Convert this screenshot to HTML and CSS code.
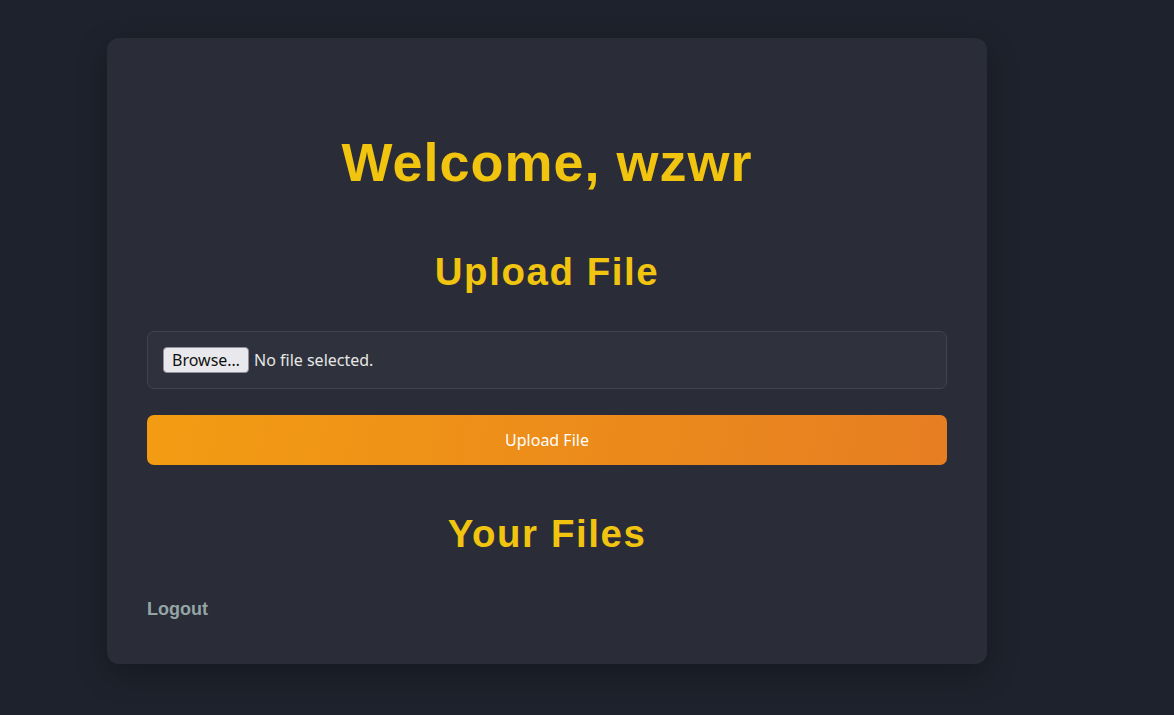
FILE: index.html
```html
<!DOCTYPE html>
<html lang="en">
<head>
<meta charset="utf-8">
<title>Dashboard</title>
<link rel="stylesheet" href="styles.css">
</head>
<body>
  <main class="card">
    <h1 class="title">Welcome, wzwr</h1>
    <h2 class="section-title upload-title">Upload File</h2>
    <form class="upload-form">
      <label class="file-box">
        <input type="file" class="file-input">
        <span class="browse-btn">Browse…</span>
        <span class="file-status">No file selected.</span>
      </label>
      <button type="button" class="upload-btn">Upload File</button>
    </form>
    <h2 class="section-title files-title">Your Files</h2>
    <a class="logout" href="#">Logout</a>
  </main>
</body>
</html>
```

FILE: styles.css
```css
html, body {
  margin: 0;
  padding: 0;
}

body {
  background: #1e222c;
  font-family: "Liberation Sans", Arial, sans-serif;
  min-height: 715px;
  padding: 38px 0 0 107px;
  box-sizing: border-box;
}

.card {
  width: 880px;
  box-sizing: border-box;
  padding: 40px 40px 44px;
  background: #2a2d38;
  border-radius: 12px;
  box-shadow: 0 10px 30px rgba(0, 0, 0, 0.25);
  display: flex;
  flex-direction: column;
}

.title {
  margin: 54px 0 0;
  font-size: 54px;
  line-height: 60px;
  font-weight: 700;
  letter-spacing: 1px;
  color: #f1c40f;
  text-align: center;
}

.section-title {
  margin: 0;
  font-size: 38.4px;
  line-height: 44px;
  font-weight: 700;
  letter-spacing: 1.6px;
  color: #f1c40f;
  text-align: center;
}

.upload-title {
  margin-top: 58px;
}

.files-title {
  margin-top: 47px;
}

.upload-form {
  margin-top: 37px;
  display: flex;
  flex-direction: column;
  gap: 26px;
}

.file-box {
  height: 58px;
  box-sizing: border-box;
  border: 1px solid #41444e;
  border-radius: 7px;
  background: #2f323d;
  padding: 0 15px;
  display: flex;
  align-items: center;
  gap: 5px;
  font-family: "Noto Sans", sans-serif;
  font-size: 16px;
  color: #e6e6e6;
}

.file-input {
  display: none;
}

.browse-btn {
  height: 26px;
  width: 86px;
  box-sizing: border-box;
  background: #e9e9ed;
  border: 1px solid #8f8f9d;
  border-radius: 4px;
  color: #111;
  font-size: 16px;
  display: flex;
  align-items: center;
  justify-content: center;
}

.upload-btn {
  height: 50px;
  border: none;
  border-radius: 7px;
  background: linear-gradient(100deg, #f39c12 0%, #e67e22 100%);
  color: #ffffff;
  font-family: "Noto Sans", sans-serif;
  font-size: 16px;
  line-height: 22px;
  padding-top: 1px;
  cursor: pointer;
}

.logout {
  margin-top: 42px;
  align-self: flex-start;
  font-size: 18px;
  line-height: 22px;
  font-weight: 700;
  color: #95a5a6;
  text-decoration: none;
}
```
